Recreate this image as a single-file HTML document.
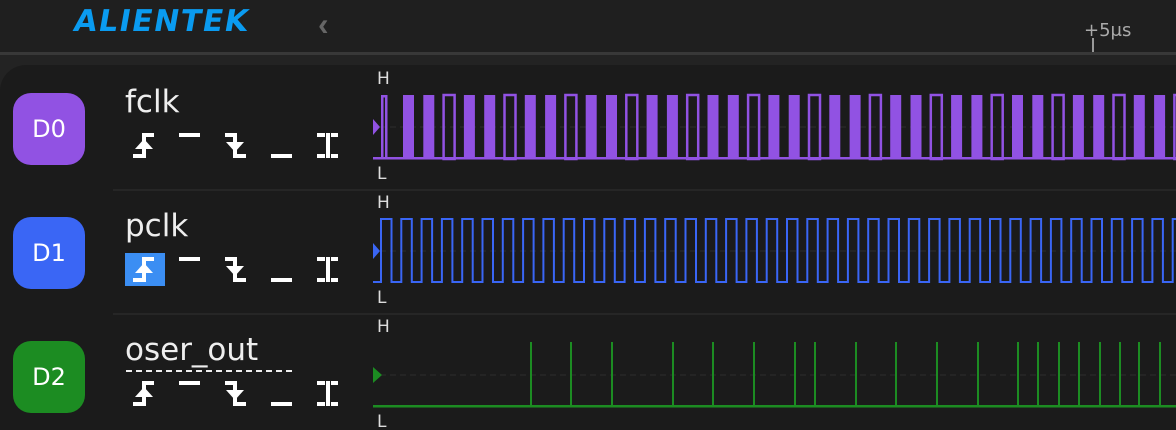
<!DOCTYPE html>
<html><head><meta charset="utf-8"><style>
html,body{margin:0;width:1176px;height:430px;overflow:hidden}
body{background:#232323;font-family:"Liberation Sans","DejaVu Sans",sans-serif;position:relative}
.top{position:absolute;left:0;top:0;width:1176px;height:52px;background:#1f1f1f}
.line{position:absolute;left:0;top:52px;width:1176px;height:3px;background:#383838}
.panel{position:absolute;left:0;top:65px;width:1176px;height:365px;background:#1b1b1b;border-radius:26px 0 0 0}
.logo{position:absolute;left:71px;top:4px;color:#0a9bf0;font-weight:bold;font-size:30px;letter-spacing:1.5px;font-family:"DejaVu Sans",sans-serif;transform:skewX(-10deg);transform-origin:0 100%}
.badge{position:absolute;left:13px;width:72px;height:72px;border-radius:18px;color:#fff;font-size:24px;display:flex;align-items:center;justify-content:center;font-family:"DejaVu Sans",sans-serif}
.name{position:absolute;left:125px;color:#eee;font-size:31px;font-family:"DejaVu Sans",sans-serif}
.sep{position:absolute;left:113px;width:1063px;height:2px;background:#262626}
.hl{position:absolute;left:377px;color:#ddd;font-size:17px;font-family:"DejaVu Sans",sans-serif}
svg{position:absolute;left:0;top:0}
</style></head><body>
<div class="top"></div><div class="line"></div>
<div class="logo">ALIENTEK</div>
<div style="position:absolute;left:318px;top:6px;color:#666;font-size:32px;font-weight:bold">&#8249;</div>
<div style="position:absolute;left:1084px;top:20px;color:#aaa;font-size:18px;font-family:'DejaVu Sans',sans-serif">+5μs</div>
<div style="position:absolute;left:1092px;top:38px;width:2px;height:14px;background:#999"></div>
<div class="panel"></div>
<div class="sep" style="top:189px"></div><div class="sep" style="top:313px"></div>
<div class="badge" style="top:93px;background:#9152e3">D0</div>
<div class="badge" style="top:217px;background:#3a66f5">D1</div>
<div class="badge" style="top:341px;background:#1c8c22">D2</div>
<div class="name" style="top:84px">fclk</div>
<div class="name" style="top:208px">pclk</div>
<div class="name" style="top:332px">oser_out</div>
<div style="position:absolute;left:126px;top:370px;width:166px;border-top:2px dashed #eee"></div>
<div style="position:absolute;left:125px;top:253px;width:40px;height:33px;background:#3b8ef3"></div>
<div class="hl" style="top:69px">H</div><div class="hl" style="top:164px">L</div>
<div class="hl" style="top:193px">H</div><div class="hl" style="top:288px">L</div>
<div class="hl" style="top:317px">H</div><div class="hl" style="top:412px">L</div>
<svg id="s" width="1176" height="430"></svg>
<script>
var s='';
function R(x,y,w,h){s+='<rect x="'+x+'" y="'+y+'" width="'+w+'" height="'+h+'" fill="#fff"/>';}
function icons(y){
 R(133,y+21,13,4);R(142,y,4,25);R(142,y,12,4);
 s+='<polygon points="135,'+(y+16)+' 144,'+(y+6)+' 153,'+(y+16)+'" fill="#fff"/>';
 R(179,y,21,4);
 R(225,y,12,4);R(233,y,4,25);R(233,y+21,13,4);
 s+='<polygon points="226,'+(y+9)+' 235,'+(y+19)+' 244,'+(y+9)+'" fill="#fff"/>';
 R(271,y+21,21,4);
 R(317,y,8,4);R(331,y,7,4);R(317,y+21,8,4);R(331,y+21,7,4);R(326,y,4,25);
}
icons(133);icons(257);icons(381);
[127,251,375].forEach(function(y){s+='<line x1="380" y1="'+y+'" x2="1176" y2="'+y+'" stroke="#2c2c2c" stroke-dasharray="6 4"/>';});
var P='#9152e3';
s+='<polygon points="373,119 380,127 373,135" fill="'+P+'"/>';
s+='<rect x="373" y="157" width="803" height="2.5" fill="'+P+'"/>';
s+='<rect x="381" y="95" width="2.5" height="64" fill="'+P+'"/><rect x="381" y="95" width="6" height="2.5" fill="'+P+'"/><rect x="385" y="95" width="2.5" height="64" fill="'+P+'"/>';
for(var k=0;;k++){var x=403+k*20.3;if(x>1176)break;
 if(k%3==2){s+='<rect x="'+x+'" y="95" width="11" height="64" fill="none" stroke="'+P+'" stroke-width="2.5"/>';}
 else s+='<rect x="'+x+'" y="95" width="11" height="64" fill="'+P+'"/>';}
var B='#3a66f5',d='M373 282';
s+='<polygon points="373,243 380,251 373,259" fill="'+B+'"/>';
for(var k=0;;k++){var x=381+k*20.3;if(x>1180)break;d+='H'+x+'V219H'+(x+10.5)+'V282';}
s+='<path d="'+d+'" fill="none" stroke="'+B+'" stroke-width="2"/>';
var G='#1c8c22';
s+='<polygon points="373,367 382,375 373,383" fill="'+G+'"/>';
s+='<rect x="373" y="405" width="803" height="2.5" fill="'+G+'"/>';
[530,570,611,672,712,753,794,814,855,895,936,977,1017,1037,1058,1078,1099,1119,1138,1159].forEach(function(x){s+='<rect x="'+x+'" y="342" width="2" height="64" fill="'+G+'"/>';});
document.getElementById('s').innerHTML=s;
</script>
</body></html>
